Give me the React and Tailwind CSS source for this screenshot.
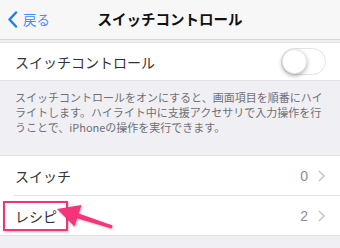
export default function App() {
  const font = { fontFamily: '"Noto Sans CJK JP", "Noto Sans", sans-serif' };
  return (
    <div className="relative w-[340px] h-[248px] overflow-hidden bg-[#efeff4]" style={font}>
      {/* nav bar */}
      <div className="relative flex items-center h-[40px] bg-[#f7f7f8] border-b border-[#d6d6da]">
        <div className="flex items-center pl-[7px] gap-[5px] text-[#1b7cf6]">
          <svg width="11" height="17" viewBox="0 0 11 17">
            <path d="M9 1.5 L2.5 8.5 L9 15.5" fill="none" stroke="#1b7cf6" strokeWidth="2.4" strokeLinecap="round" strokeLinejoin="round" />
          </svg>
          <span className="text-[13.5px] text-[#3d8ef8] leading-none">戻る</span>
        </div>
        <div className="absolute inset-x-0 top-0 h-[39px] flex items-center justify-center pointer-events-none">
          <span className="text-[14.5px] font-semibold text-[#111] leading-none">スイッチコントロール</span>
        </div>
      </div>

      {/* switch control row */}
      <div className="mt-[2px] h-[39px] bg-white border-y border-[#e2e2e6] flex items-center justify-between pl-[15px] pr-[14px]">
        <span className="text-[14px] text-[#333] leading-none">スイッチコントロール</span>
        <div className="w-[45px] h-[27px] rounded-full border border-[#e3e3e6] bg-white relative">
          <div className="absolute left-[0px] top-[0px] w-[25px] h-[25px] rounded-full bg-white shadow-[0_2px_4px_rgba(0,0,0,0.3)] border border-[#e6e6e6]" />
        </div>
      </div>

      {/* description */}
      <div className="h-[74px] pl-[15px] pr-[10px] pt-[9px] text-[11px] leading-[15px] text-[#707074]">
        スイッチコントロールをオンにすると、画面項目を順番にハイ<br />
        ライトします。ハイライト中に支援アクセサリで入力操作を行<br />
        うことで、iPhoneの操作を実行できます。
      </div>

      {/* list */}
      <div className="bg-white border-y border-[#e2e2e6]">
        <div className="h-[39px] flex items-center justify-between pl-[15px] pr-[15px]">
          <span className="text-[14px] text-[#333] leading-none">スイッチ</span>
          <div className="flex items-center gap-[10px]">
            <span className="text-[14px] text-[#8e8e93] leading-none" style={{ fontFamily: '"Liberation Sans", sans-serif' }}>0</span>
            <svg width="7" height="12" viewBox="0 0 7 12">
              <path d="M1 1 L6 6 L1 11" fill="none" stroke="#c4c4c8" strokeWidth="1.5" />
            </svg>
          </div>
        </div>
        <div className="ml-[14px] h-px bg-[#e2e2e6]" />
        <div className="h-[39px] flex items-center justify-between pl-[15px] pr-[15px]">
          <span className="text-[14px] text-[#333] leading-none">レシピ</span>
          <div className="flex items-center gap-[10px]">
            <span className="text-[14px] text-[#8e8e93] leading-none" style={{ fontFamily: '"Liberation Sans", sans-serif' }}>2</span>
            <svg width="7" height="12" viewBox="0 0 7 12">
              <path d="M1 1 L6 6 L1 11" fill="none" stroke="#c4c4c8" strokeWidth="1.5" />
            </svg>
          </div>
        </div>
      </div>

      {/* annotation overlay */}
      <div className="absolute left-[3px] top-[201px] w-[65px] h-[30px] border-[2px] border-[#f2337a] shadow-[1px_1px_2px_rgba(0,0,0,0.25)]" />
      <svg className="absolute left-0 top-0" width="340" height="248" viewBox="0 0 340 248">
        <polygon
          points="57,209 81.5,205 78.7,213.4 112.5,225.6 111.5,228.4 77.1,218.2 74.5,226.5"
          fill="#f5347b"
          style={{ filter: 'drop-shadow(1px 1px 1px rgba(0,0,0,0.3))' }}
        />
      </svg>
    </div>
  );
}
